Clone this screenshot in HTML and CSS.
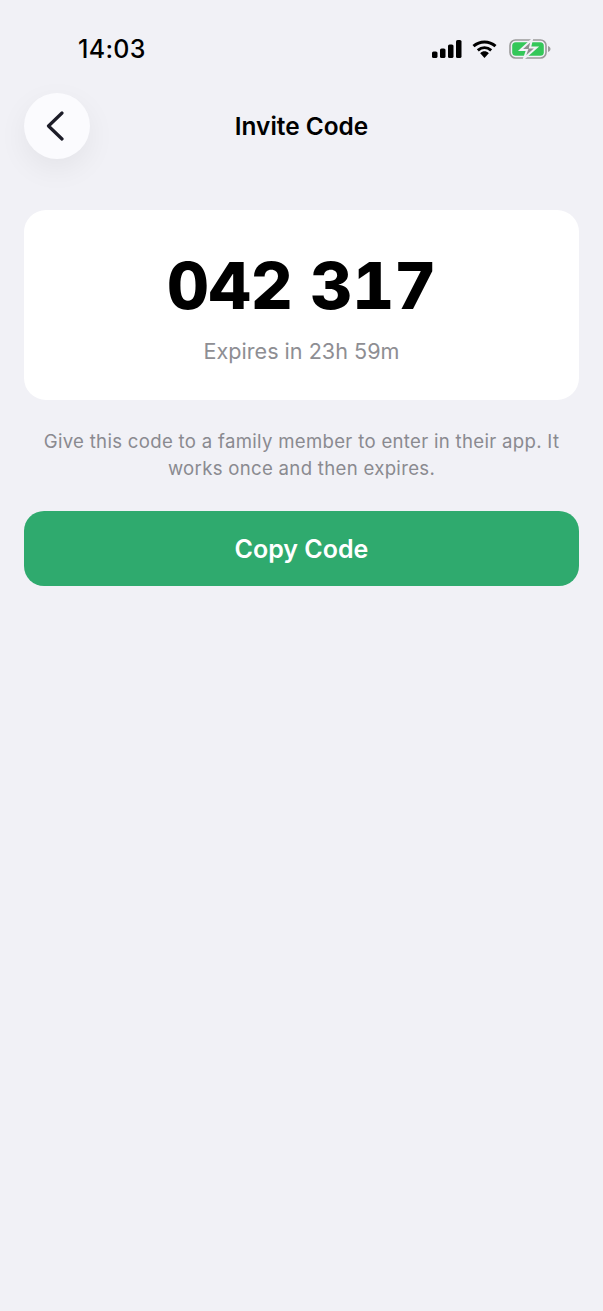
FILE: index.html
```html
<!DOCTYPE html>
<html lang="en">
<head>
    <meta charset="UTF-8">
    <meta name="viewport" content="width=device-width, initial-scale=1.0">
    <title>Invite Code</title>
    <link rel="stylesheet" href="styles.css">
</head>
<body>

    <!-- Status bar -->
    <div class="status-bar">
        <span class="status-time">14:03</span>
        <div class="status-icons">
            <svg width="30" height="18" viewBox="0 0 30 18">
                <rect x="0" y="11.5" width="5.5" height="6.5" rx="1.6" fill="#000"/>
                <rect x="8" y="8.5" width="5.5" height="9.5" rx="1.6" fill="#000"/>
                <rect x="16" y="4.5" width="5.5" height="13.5" rx="1.6" fill="#000"/>
                <rect x="24" y="0" width="5.5" height="18" rx="1.6" fill="#000"/>
            </svg>
            <svg width="25" height="18" viewBox="0 0 25 18">
                <path d="M1.5 6.2C7.8 .6 17.2 .6 23.5 6.2" fill="none" stroke="#000" stroke-width="3"/>
                <path d="M5.8 10.3C9.8 6.9 15.2 6.9 19.2 10.3" fill="none" stroke="#000" stroke-width="3"/>
                <path d="M8.2 13.2C10.8 10.6 14.2 10.6 16.8 13.2L12.5 18Z" fill="#000"/>
            </svg>
            <svg class="battery" width="42" height="20" viewBox="0 0 42 20">
                <rect x="1" y="1" width="36" height="18" rx="5.5" fill="none" stroke="#9a9a9a" stroke-width="1.6"/>
                <rect x="3.2" y="3.2" width="31.6" height="13.6" rx="3.6" fill="#34c759"/>
                <path d="M39 7v6c1.5-.5 2.5-1.6 2.5-3s-1-2.5-2.5-3Z" fill="#9a9a9a"/>
                <path d="M23 .5 11.5 11h6.5L15 19.5 27.5 8.5h-6.5Z" fill="#8f8f8f" stroke="#f1f1f6" stroke-width="2"/>
            </svg>
        </div>
    </div>

    <!-- Header -->
    <header class="top-bar">
        <button class="btn-back" aria-label="Back">
            <svg width="18" height="30" viewBox="0 0 18 30">
                <path d="M16 2 2.5 15 16 28" fill="none" stroke="#1c1c28" stroke-width="3.2" stroke-linecap="round" stroke-linejoin="round"/>
            </svg>
        </button>
        <h1 class="page-title">Invite Code</h1>
    </header>

    <main class="content">
        <div class="code-card">
            <div class="code-value">042 317</div>
            <div class="code-expiry">Expires in 23h 59m</div>
        </div>

        <p class="help-text">Give this code to a family member to enter in their app. It works once and then expires.</p>

        <button class="btn-copy">Copy Code</button>
    </main>

</body>
</html>
```

FILE: styles.css
```css
body {
    font-family: Inter, "Liberation Sans", sans-serif;
    margin: 0;
    padding: 0;
    min-height: 1311px;
    background-color: #f1f1f6;
    color: #000;
}

.status-bar {
    display: flex;
    align-items: center;
    justify-content: space-between;
    height: 26px;
    padding: 36px 52px 0 78px;
}

.status-time {
    font-size: 25px;
    font-weight: 500;
    letter-spacing: 0.3px;
    color: #000;
}

.status-icons {
    display: flex;
    align-items: center;
    gap: 10px;
}

.status-icons svg {
    display: block;
}

.status-icons .battery {
    margin-left: 2px;
}

.top-bar {
    position: relative;
    display: flex;
    align-items: center;
    justify-content: center;
    height: 66px;
    margin-top: 31px;
}

.btn-back {
    position: absolute;
    left: 24px;
    top: 0;
    width: 66px;
    height: 66px;
    display: flex;
    align-items: center;
    justify-content: center;
    padding: 0 4px 0 0;
    border: none;
    border-radius: 50%;
    background-color: #fbfbfe;
    box-shadow: 0 10px 30px rgba(0, 0, 0, 0.06);
}

.page-title {
    margin: 0;
    font-size: 24.4px;
    font-weight: 600;
    color: #000;
}

.content {
    padding: 51px 24px 0;
}

.code-card {
    height: 190px;
    box-sizing: border-box;
    padding-top: 38px;
    border-radius: 22px;
    background-color: #fff;
    text-align: center;
}

.code-value {
    font-size: 65px;
    line-height: 76px;
    font-weight: 800;
    font-variant-numeric: tabular-nums;
}

.code-expiry {
    margin-top: 13px;
    font-size: 21.6px;
    line-height: 28px;
    color: #8e8e93;
}

.help-text {
    margin: 28px 5px 0;
    font-size: 18.6px;
    line-height: 27px;
    text-align: center;
    color: #8a8a90;
    letter-spacing: 0.3px;
}

.btn-copy {
    display: block;
    width: 100%;
    height: 75px;
    margin-top: 29px;
    border: none;
    border-radius: 20px;
    background-color: #2faa6e;
    color: #fff;
    font-family: inherit;
    font-size: 25px;
    font-weight: 600;
}
```
